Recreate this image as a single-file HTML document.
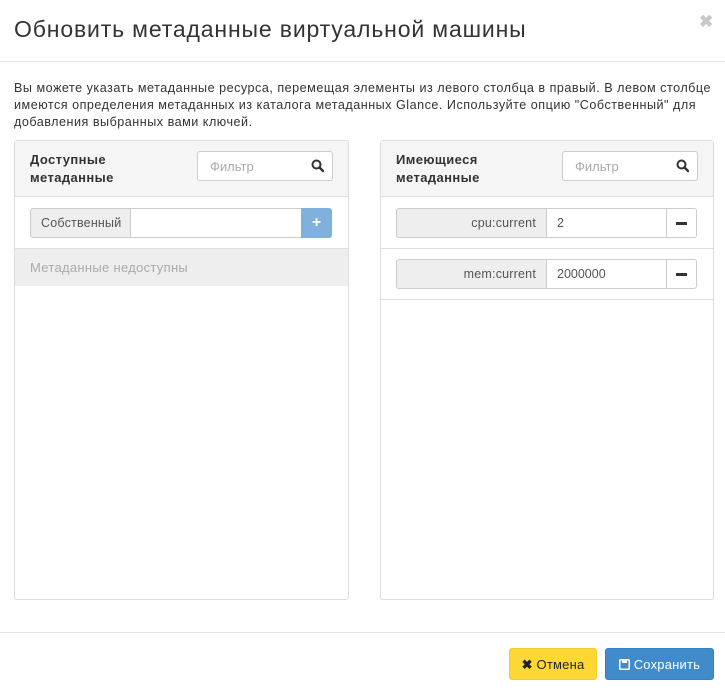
<!DOCTYPE html><html><head><meta charset="utf-8"><style>
*{box-sizing:border-box}body{margin:0;width:725px;height:691px;background:#fff;font-family:"Liberation Sans",sans-serif;color:#333;position:relative;overflow:hidden}
.a{position:absolute}
.title{left:14px;top:16px;font-size:23px;letter-spacing:0.85px;color:#333;white-space:nowrap}
.close{left:699px;top:12px;font-size:17px;color:#c8c8c8;font-weight:bold}
.hr{left:0;width:725px;height:1px;background:#e5e5e5}
.desc{left:14px;top:80px;width:720px;font-size:12.6px;line-height:17px;color:#333;white-space:nowrap;letter-spacing:0.5px}
.panel{border:1px solid #ddd;border-radius:3px;background:#fff}
.ph{background:#f5f5f5;border-bottom:1px solid #ddd;height:57px}
.pt{font-weight:bold;font-size:13px;line-height:18px;letter-spacing:0.4px}
.filter{border:1px solid #ccc;border-radius:3px;background:#fff;height:30px;width:136px;font-size:13px;color:#aaa;padding:7px 12px}
.rowb{height:1px;background:#ddd}
.addon{background:#eee;border:1px solid #ccc;height:30px;font-size:12.5px;color:#555;padding:7px 10px;letter-spacing:0.2px}
.inp{border:1px solid #ccc;height:30px;background:#fff;font-size:12.5px;color:#555;padding:7px 10px}
.btn{border-radius:3px;height:32px;font-size:13px;padding:8px 0;text-align:center;letter-spacing:0.2px}
</style></head><body>
<div class="a title">Обновить метаданные виртуальной машины</div>
<div class="a close">✖</div>
<div class="a hr" style="top:61px"></div>
<div class="a desc">Вы можете указать метаданные ресурса, перемещая элементы из левого столбца в правый. В левом столбце<br>имеются определения метаданных из каталога метаданных Glance. Используйте опцию "Собственный" для<br>добавления выбранных вами ключей.</div>

<div class="a panel" style="left:14px;top:140px;width:335px;height:460px"></div>
<div class="a ph" style="left:15px;top:141px;width:333px;height:56px"></div>
<div class="a pt" style="left:30px;top:151px">Доступные<br>метаданные</div>
<div class="a filter" style="left:197px;top:151px">Фильтр</div>
<svg class="a" style="left:311px;top:159px" width="14" height="14" viewBox="0 0 14 14"><circle cx="5.5" cy="5.5" r="4" fill="none" stroke="#333" stroke-width="2"/><path d="M8.5 8.5L12 12" stroke="#333" stroke-width="2.4" stroke-linecap="round"/></svg>
<div class="a addon" style="left:30px;top:208px;width:101px;border-radius:3px 0 0 3px">Собственный</div>
<div class="a inp" style="left:130px;top:208px;width:172px"></div>
<div class="a" style="left:301px;top:208px;width:31px;height:30px;background:#7fb1dc;border-radius:0 3px 3px 0;color:#fff;font-weight:bold;font-size:16px;text-align:center;line-height:29px">+</div>
<div class="a rowb" style="left:15px;top:248px;width:333px"></div>
<div class="a" style="left:15px;top:249px;width:333px;height:37px;background:#eee;color:#aaa;font-size:13px;padding:11px 15px;letter-spacing:0.3px">Метаданные недоступны</div>

<div class="a panel" style="left:380px;top:140px;width:334px;height:460px"></div>
<div class="a ph" style="left:381px;top:141px;width:332px;height:56px"></div>
<div class="a pt" style="left:396px;top:151px">Имеющиеся<br>метаданные</div>
<div class="a filter" style="left:562px;top:151px">Фильтр</div>
<svg class="a" style="left:676px;top:159px" width="14" height="14" viewBox="0 0 14 14"><circle cx="5.5" cy="5.5" r="4" fill="none" stroke="#333" stroke-width="2"/><path d="M8.5 8.5L12 12" stroke="#333" stroke-width="2.4" stroke-linecap="round"/></svg>

<div class="a addon" style="left:396px;top:208px;width:151px;text-align:right;border-radius:3px 0 0 3px">cpu:current</div>
<div class="a inp" style="left:546px;top:208px;width:121px">2</div>
<div class="a" style="left:666px;top:208px;width:31px;height:30px;border:1px solid #ccc;border-radius:0 3px 3px 0"><div class="a" style="left:9px;top:13px;width:11px;height:3px;background:#333"></div></div>
<div class="a rowb" style="left:381px;top:248px;width:332px"></div>
<div class="a addon" style="left:396px;top:259px;width:151px;text-align:right;border-radius:3px 0 0 3px">mem:current</div>
<div class="a inp" style="left:546px;top:259px;width:121px">2000000</div>
<div class="a" style="left:666px;top:259px;width:31px;height:30px;border:1px solid #ccc;border-radius:0 3px 3px 0"><div class="a" style="left:9px;top:13px;width:11px;height:3px;background:#333"></div></div>
<div class="a rowb" style="left:381px;top:299px;width:332px"></div>

<div class="a hr" style="top:632px"></div>
<div class="a btn" style="left:509px;top:648px;width:88px;background:#fdd835;border:1px solid #f2cc2a;color:#222"><b>✖</b> Отмена</div>
<div class="a btn" style="left:605px;top:648px;width:109px;background:#428bca;border:1px solid #3a7dbb;color:#fff">
<svg width="11" height="11" viewBox="0 0 11 11" style="vertical-align:-1px"><rect x="0.75" y="0.75" width="9.5" height="9.5" rx="1" fill="none" stroke="#fff" stroke-width="1.5"/><rect x="3" y="1" width="5" height="3" fill="#fff"/></svg> Сохранить</div>
</body></html>
